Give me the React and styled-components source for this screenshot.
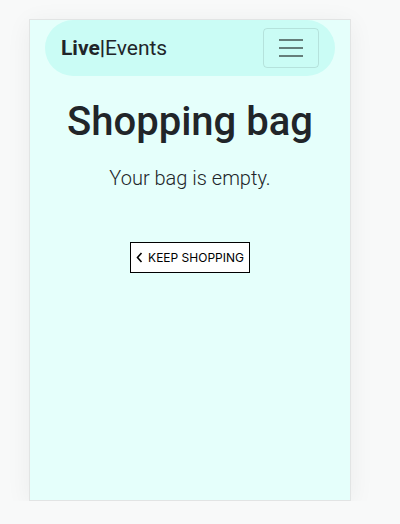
import React from "react";
import styled, { createGlobalStyle } from "styled-components";

const GlobalStyle = createGlobalStyle`
  html, body {
    margin: 0;
    padding: 0;
    background: #f8f9f9;
  }
  body {
    font-family: Roboto, "Noto Sans", sans-serif;
    color: #212529;
  }
`;

const Page = styled.div`
  padding: 19px 0 0 29px;
`;

const Frame = styled.div`
  width: 320px;
  height: 480px;
  background: #e5fffb;
  border: 1px solid #e2e4e4;
  box-shadow: 0 4px 24px rgba(0, 0, 0, 0.06);
  display: flex;
  flex-direction: column;
  align-items: center;
`;

const Navbar = styled.nav`
  align-self: stretch;
  margin: 0 15px;
  height: 56px;
  box-sizing: border-box;
  padding: 8px 16px;
  background: #cafcf5;
  border-radius: 28px;
  display: flex;
  align-items: center;
  justify-content: space-between;
`;

const Brand = styled.a`
  font-size: 21px;
  color: #212529;
  text-decoration: none;
  b {
    font-weight: 700;
  }
`;

const Toggler = styled.button`
  width: 56px;
  height: 40px;
  background: transparent;
  border: 1px solid rgba(0, 0, 0, 0.1);
  border-radius: 4px;
  display: flex;
  flex-direction: column;
  align-items: center;
  justify-content: center;
  gap: 6px;
  padding: 0;
`;

const Bar = styled.span`
  display: block;
  width: 24px;
  height: 2px;
  background: rgba(0, 0, 0, 0.5);
`;

const Title = styled.h1`
  margin: 22px 0 17px;
  font-size: 40px;
  font-weight: 500;
  line-height: 48px;
`;

const Lead = styled.p`
  margin: 0 0 49px;
  font-size: 20px;
  font-weight: 300;
  line-height: 30px;
`;

const OutlineButton = styled.button`
  height: 31px;
  width: 120px;
  box-sizing: border-box;
  background: #fff;
  border: 1px solid #000;
  border-radius: 0;
  font-family: Inter, "Noto Sans", sans-serif;
  font-size: 12px;
  color: #000;
  text-transform: uppercase;
  display: flex;
  align-items: center;
  justify-content: center;
  gap: 5px;
  padding: 0;
`;

const App = () => (
  <Page>
    <GlobalStyle />
    <Frame>
      <Navbar>
        <Brand href="#">
          <b>Live|</b>Events
        </Brand>
        <Toggler aria-label="menu">
          <Bar />
          <Bar />
          <Bar />
        </Toggler>
      </Navbar>
      <Title>Shopping bag</Title>
      <Lead>Your bag is empty.</Lead>
      <OutlineButton>
        <svg width="7" height="11" viewBox="0 0 7 11" fill="none">
          <path d="M5.5 1 L1.5 5.5 L5.5 10" stroke="#000" strokeWidth="1.6" />
        </svg>
        Keep shopping
      </OutlineButton>
    </Frame>
  </Page>
);

export default App;
